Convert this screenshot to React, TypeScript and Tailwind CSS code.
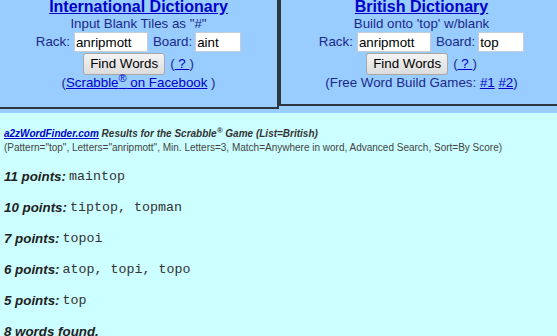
export default function App() {
  return (
    <div className="w-[557px] h-[336px] overflow-hidden bg-[#99ccff] font-['Liberation_Sans',Arial,sans-serif]">
      <div className="flex items-start h-[113px] w-[562px]">
        <div className="w-[279px] h-[109px] shrink-0 border-r-2 border-b-2 border-[#2d3540] flex flex-col items-center">
          <a href="#" className="-mt-[2px] text-[16px] leading-[18px] font-bold underline text-[#0000cc]">
            International Dictionary
          </a>
          <div className="text-[13.33px] leading-[16px] text-[#1a2a88]">Input Blank Tiles as "#"</div>
          <div className="flex items-center text-[13.33px] text-[#1a2a88]">
            <span className="mr-[4px]">Rack:</span>
            <input
              defaultValue="anripmott"
              className="w-[74px] h-[20px] bg-white border border-[#c4ccd8] px-[1px] text-[13.33px] text-black outline-none"
            />
            <span className="ml-[5px] mr-[3px]">Board:</span>
            <input
              defaultValue="aint"
              className="w-[46px] h-[20px] bg-white border border-[#c4ccd8] px-[1px] text-[13.33px] text-black outline-none"
            />
          </div>
          <div className="mt-[1px] flex items-center text-[13.33px] text-[#1a2a88]">
            <button className="w-[82px] h-[22px] mr-[5px] rounded-[3px] border border-[#a8a8a8] bg-gradient-to-b from-[#f4f4f4] to-[#dcdcdc] text-black text-[13.33px]">
              Find Words
            </button>
            <span>
              (<a href="#" className="underline text-[#0000cc]"> ? </a>)
            </span>
          </div>
          <div className="text-[13.33px] leading-[16px] text-[#1a2a88]">
            (
            <a href="#" className="underline text-[#0000cc]">
              Scrabble<sup className="text-[11px]">®</sup> on Facebook
            </a>{" "}
            )
          </div>
        </div>
        <div className="w-[283px] h-[106px] shrink-0 border-l-2 border-b-2 border-[#2d3540] flex flex-col items-center">
          <a href="#" className="-mt-[2px] text-[16px] leading-[18px] font-bold underline text-[#0000cc]">
            British Dictionary
          </a>
          <div className="text-[13.33px] leading-[16px] text-[#1a2a88]">Build onto 'top' w/blank</div>
          <div className="flex items-center text-[13.33px] text-[#1a2a88]">
            <span className="mr-[4px]">Rack:</span>
            <input
              defaultValue="anripmott"
              className="w-[74px] h-[20px] bg-white border border-[#c4ccd8] px-[1px] text-[13.33px] text-black outline-none"
            />
            <span className="ml-[5px] mr-[3px]">Board:</span>
            <input
              defaultValue="top"
              className="w-[46px] h-[20px] bg-white border border-[#c4ccd8] px-[1px] text-[13.33px] text-black outline-none"
            />
          </div>
          <div className="mt-[1px] flex items-center text-[13.33px] text-[#1a2a88]">
            <button className="w-[82px] h-[22px] mr-[5px] rounded-[3px] border border-[#a8a8a8] bg-gradient-to-b from-[#f4f4f4] to-[#dcdcdc] text-black text-[13.33px]">
              Find Words
            </button>
            <span>
              (<a href="#" className="underline text-[#0000cc]"> ? </a>)
            </span>
          </div>
          <div className="text-[13.33px] leading-[16px] text-[#1a2a88]">
            (Free Word Build Games:{" "}
            <a href="#" className="underline text-[#0000cc]">#1</a>{" "}
            <a href="#" className="underline text-[#0000cc]">#2</a>)
          </div>
        </div>
      </div>

      <div className="bg-[#ccffff] h-[223px] px-[4px] pt-[14px]">
        <div className="text-[10px] leading-[14px] font-bold italic text-[#333]">
          <a href="#" className="underline text-[#0000cc]">a2zWordFinder.com</a> Results for the Scrabble
          <sup className="text-[8px]">®</sup> Game (List=British)
        </div>
        <div className="text-[10px] leading-[14px] text-[#444]">
          (Pattern="top", Letters="anripmott", Min. Letters=3, Match=Anywhere in word, Advanced Search, Sort=By Score)
        </div>
        <div className="mt-[6px]">
          {[
            ["11 points:", "maintop"],
            ["10 points:", "tiptop, topman"],
            ["7 points:", "topoi"],
            ["6 points:", "atop, topi, topo"],
            ["5 points:", "top"],
          ].map(([pts, words]) => (
            <div key={pts} className="h-[31px] flex items-center">
              <span className="text-[13.33px] font-bold italic text-[#222]">{pts}</span>
              <span className="ml-[3px] text-[13.33px] text-[#333] font-['Liberation_Mono','Courier_New',monospace] whitespace-pre">
                {words}
              </span>
            </div>
          ))}
          <div className="h-[31px] flex items-center text-[13.33px] font-bold italic text-[#222]">8 words found.</div>
        </div>
      </div>
    </div>
  );
}
